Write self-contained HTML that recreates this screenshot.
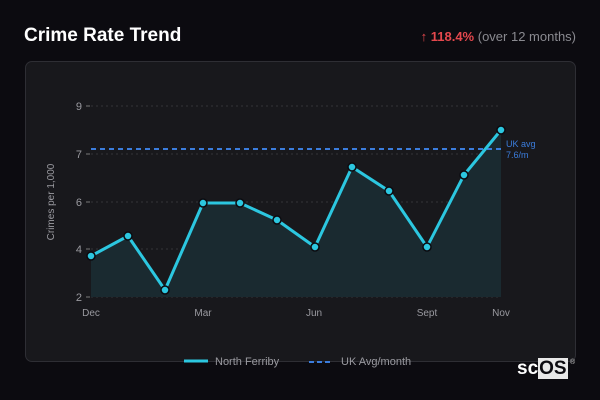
<!DOCTYPE html>
<html><head><meta charset="utf-8"><style>
html,body{margin:0;padding:0;background:#0c0b10;width:600px;height:400px;overflow:hidden;font-family:"Liberation Sans","DejaVu Sans",sans-serif;}
.t{position:absolute;left:24px;top:25px;color:#fff;font-weight:bold;font-size:19px;}
.r{position:absolute;right:24px;top:29px;font-size:13px;color:#8a8a90;}
.r b{color:#e5484d;}
.card{position:absolute;left:25px;top:61px;width:549px;height:299px;background:#18181c;border:1px solid #2e2e34;border-radius:7px;}
svg{position:absolute;left:0;top:0;}
.logo{position:absolute;left:517px;top:358px;font-weight:bold;font-size:19px;color:#fff;}
.logo span{background:#e8e8e8;color:#0c0b10;padding:0 1px;}
</style></head><body>
<div class="t">Crime Rate Trend</div>
<div class="r"><b>↑ 118.4%</b> (over 12 months)</div>
<div class="card"></div>
<svg width="600" height="400" font-family="Liberation Sans, DejaVu Sans, sans-serif">
<g stroke="#333338" stroke-dasharray="2 3" stroke-width="1">
<line x1="91" y1="106" x2="501" y2="106"/><line x1="91" y1="154" x2="501" y2="154"/>
<line x1="91" y1="202" x2="501" y2="202"/><line x1="91" y1="249" x2="501" y2="249"/>
<line x1="91" y1="297" x2="501" y2="297"/></g>
<g stroke="#777" stroke-width="1"><line x1="86" y1="106" x2="90" y2="106"/><line x1="86" y1="154" x2="90" y2="154"/><line x1="86" y1="202" x2="90" y2="202"/><line x1="86" y1="249" x2="90" y2="249"/><line x1="86" y1="297" x2="90" y2="297"/></g>
<g fill="#9a9aa0" font-size="11" text-anchor="end"><text x="82" y="110">9</text><text x="82" y="158">7</text><text x="82" y="206">6</text><text x="82" y="253">4</text><text x="82" y="301">2</text></g>
<text transform="translate(54,202) rotate(-90)" fill="#9a9aa0" font-size="10" text-anchor="middle">Crimes per 1,000</text>
<g fill="#9a9aa0" font-size="10" text-anchor="middle"><text x="91" y="316">Dec</text><text x="203" y="316">Mar</text><text x="314" y="316">Jun</text><text x="427" y="316">Sept</text><text x="501" y="316">Nov</text></g>
<polygon fill="#1a2a30" points="91,297 91,256 128,236 165,290 203,203 240,203 277,220 315,247 352,167 389,191 427,247 464,175 501,130 501,297"/>
<line x1="91" y1="149" x2="501" y2="149" stroke="#3b7ddd" stroke-width="2" stroke-dasharray="5 4"/>
<polyline fill="none" stroke="#2cc7e0" stroke-width="3" stroke-linejoin="round" points="91,256 128,236 165,290 203,203 240,203 277,220 315,247 352,167 389,191 427,247 464,175 501,130"/>
<g fill="#2cc7e0" stroke="#0c0b10" stroke-width="1.5">
<circle cx="91" cy="256" r="4"/><circle cx="128" cy="236" r="4"/><circle cx="165" cy="290" r="4"/><circle cx="203" cy="203" r="4"/><circle cx="240" cy="203" r="4"/><circle cx="277" cy="220" r="4"/><circle cx="315" cy="247" r="4"/><circle cx="352" cy="167" r="4"/><circle cx="389" cy="191" r="4"/><circle cx="427" cy="247" r="4"/><circle cx="464" cy="175" r="4"/><circle cx="501" cy="130" r="4"/></g>
<g fill="#3b7ddd" font-size="9"><text x="506" y="147">UK avg</text><text x="506" y="158">7.6/m</text></g>
<line x1="184" y1="361" x2="208" y2="361" stroke="#2cc7e0" stroke-width="3"/>
<text x="215" y="365" fill="#9a9aa0" font-size="11">North Ferriby</text>
<line x1="309" y1="362" x2="333" y2="362" stroke="#3b7ddd" stroke-width="2" stroke-dasharray="5 3"/>
<text x="341" y="365" fill="#9a9aa0" font-size="11">UK Avg/month</text>
<text x="570" y="364" fill="#ccc" font-size="7">®</text>
</svg>
<div class="logo">sc<span>OS</span></div>
</body></html>
